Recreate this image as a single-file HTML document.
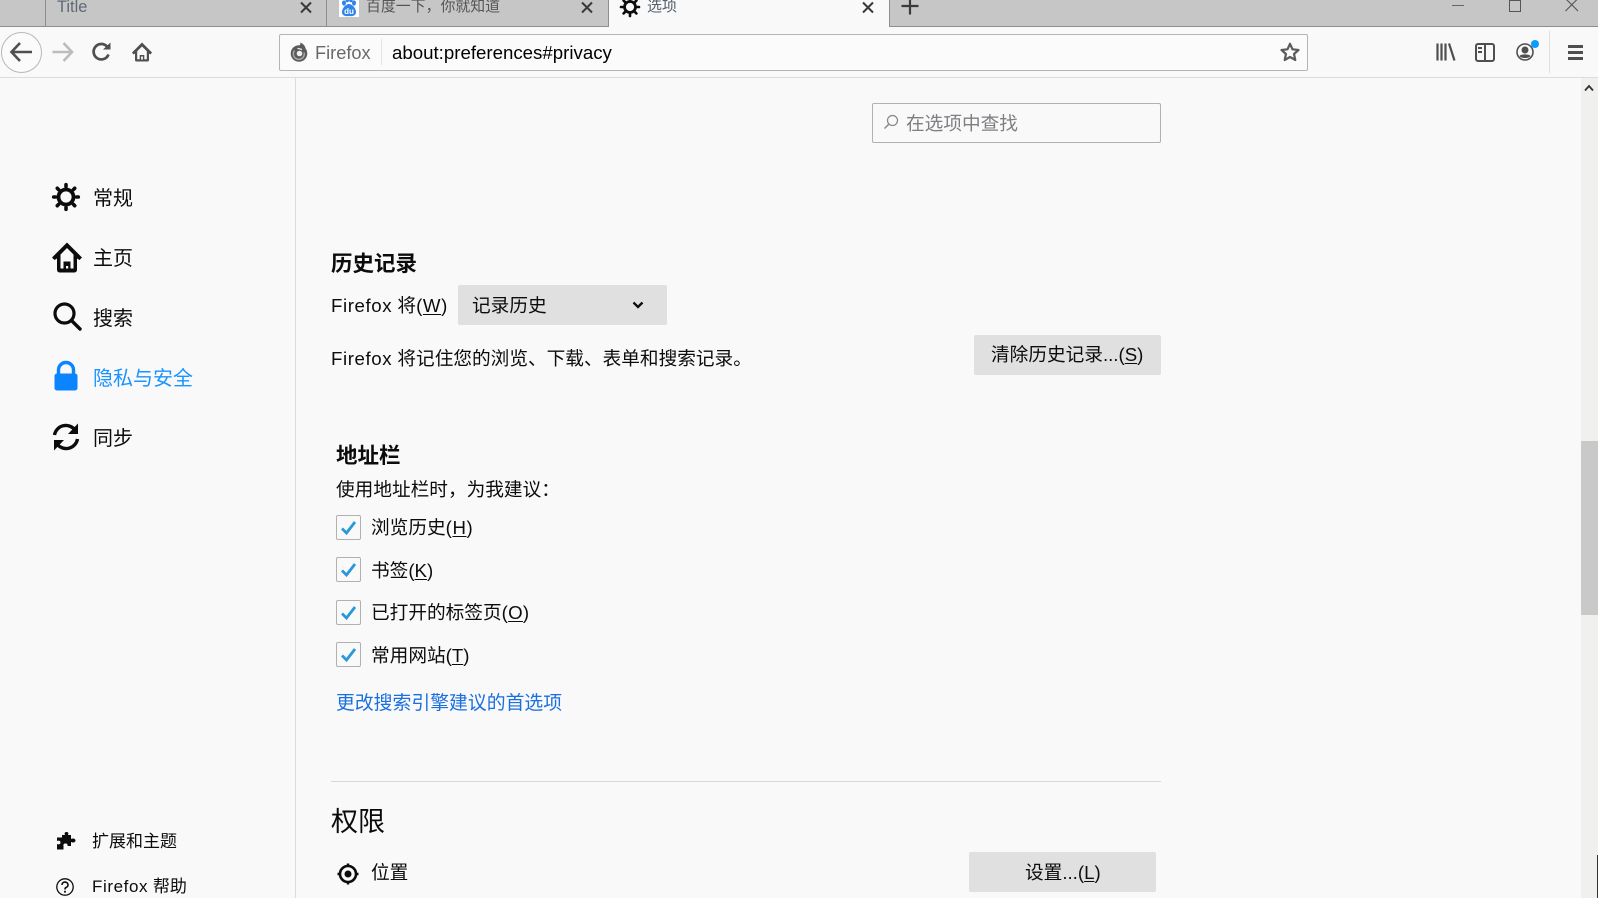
<!DOCTYPE html>
<html><head><meta charset="utf-8"><title>选项</title>
<style>
html,body{margin:0;padding:0;width:1598px;height:898px;overflow:hidden;background:#f9f9fa;}
body{position:relative;font-family:"Liberation Sans","Noto Sans CJK SC",sans-serif;color:#0c0c0d;font-size:18.67px;}
.t{position:absolute;white-space:nowrap;line-height:24px;height:24px;}
.n{font-size:20px;}
.b{position:absolute;}
svg{position:absolute;overflow:visible;}
.h{font-weight:700;font-size:21.5px;}
.cb{position:absolute;left:336px;width:23px;height:23px;border:1.5px solid #b1b1b3;border-radius:2px;}
.btn{position:absolute;background:#e0e0e1;border-radius:2px;}
.f{letter-spacing:.6px;}
u{text-underline-offset:2px;}
</style></head><body>
<!-- tab strip -->
<div class="b" style="left:0;top:0;width:1598px;height:26px;background:#c6c6c6;"></div>
<div class="b" style="left:0;top:26px;width:1598px;height:1px;background:#8e8e8e;"></div>
<div class="b" style="left:45px;top:0;width:1px;height:26px;background:#8e8e8e;"></div>
<div class="b" style="left:326px;top:0;width:1px;height:26px;background:#8e8e8e;"></div>
<div class="b" style="left:608px;top:0;width:1px;height:27px;background:#8e8e8e;"></div>
<div class="b" style="left:609px;top:0;width:280px;height:27px;background:#f9f9fa;"></div>
<div class="b" style="left:889px;top:0;width:1px;height:27px;background:#8e8e8e;"></div>
<div class="t" style="left:57px;top:-5px;font-size:16.4px;color:#5f6a78;">Title</div>
<div class="t" style="left:366px;top:-5px;font-size:14.9px;color:#555;">百度一下，你就知道</div>
<div class="t" style="left:647px;top:-5px;font-size:15px;color:#55606e;">选项</div>
<svg style="left:299px;top:1px" width="14" height="14" viewBox="0 0 14 14"><path d="M2 1.500L12 11.500M12 1.500L2 11.500" stroke="#3a3a3a" stroke-width="2"/></svg>
<svg style="left:580px;top:1px" width="14" height="14" viewBox="0 0 14 14"><path d="M2 1.500L12 11.500M12 1.500L2 11.500" stroke="#3a3a3a" stroke-width="2"/></svg>
<svg style="left:861px;top:1px" width="14" height="14" viewBox="0 0 14 14"><path d="M2 1.500L12 11.500M12 1.500L2 11.500" stroke="#3a3a3a" stroke-width="2"/></svg>
<svg style="left:901px;top:-3px" width="18" height="18" viewBox="0 0 18 18"><path d="M0.500 9H17.500M9 0.500V17.500" stroke="#3a3a3a" stroke-width="2.200"/></svg>
<!-- baidu -->
<div class="b" style="left:339px;top:-3px;width:20px;height:20px;background:#fff;"></div>
<svg style="left:339px;top:-3px" width="20" height="20" viewBox="0 0 20 20">
<ellipse cx="5" cy="6" rx="2" ry="2.600" fill="#2f83ea"/><ellipse cx="15" cy="6" rx="2" ry="2.600" fill="#2f83ea"/><ellipse cx="8.300" cy="3" rx="1.800" ry="2.400" fill="#2f83ea"/><ellipse cx="11.900" cy="3" rx="1.800" ry="2.400" fill="#2f83ea"/>
<path d="M10 7C7 7 3 11 3 15C3 18.500 6 19.500 10 19C14 19.500 17 18.500 17 15C17 11 13 7 10 7Z" fill="#2f83ea"/>
<text x="10" y="17" font-size="8" font-weight="700" text-anchor="middle" fill="#fff" font-family="Liberation Sans">du</text></svg>
<!-- active tab gear -->
<svg style="left:620px;top:-3px" width="20" height="20" viewBox="-10 -10 20 20"><g stroke="#0c0c0d" fill="none"><circle r="5.500" stroke-width="2.800"/><g stroke-width="2.600" stroke-linecap="round"><path d="M0 -9V-7.500M0 9V7.500M-9 0H-7.500M9 0H7.500M-6.400 -6.400L-5.300 -5.300M6.400 6.400L5.300 5.300M-6.400 6.400L-5.300 5.300M6.400 -6.400L5.300 -5.300"/></g></g></svg>
<!-- window controls -->
<div class="b" style="left:1452px;top:5px;width:12px;height:1px;background:#666;"></div>
<div class="b" style="left:1509px;top:0;width:10px;height:10px;border:1px solid #555;"></div>
<svg style="left:1565px;top:-2px" width="14" height="14" viewBox="0 0 14 14"><path d="M0.500 0.500L13 13M13 0.500L0.500 13" stroke="#555" stroke-width="1.100"/></svg>
<!-- toolbar -->
<div class="b" style="left:0;top:27px;width:1598px;height:50px;background:#f9f9fa;"></div>
<div class="b" style="left:0;top:77px;width:1598px;height:1px;background:#dcdcde;"></div>
<div class="b" style="left:1px;top:32px;width:39px;height:39px;border:1px solid #b8b8b8;border-radius:50%;background:#fbfbfb;"></div>
<svg style="left:8px;top:40px" width="26" height="24" viewBox="0 0 26 24"><path d="M4 12H24M12 3L3.500 12L12 21" fill="none" stroke="#4f4f50" stroke-width="2.600"/></svg>
<svg style="left:50px;top:40px" width="26" height="24" viewBox="0 0 26 24"><path d="M2.500 12H21.500M13.500 3L22 12L13.500 21" fill="none" stroke="#bcbcbd" stroke-width="2.600"/></svg>
<svg style="left:92px;top:42px" width="20" height="20" viewBox="0 0 20 20"><path d="M16.500 12.500A7.700 7.700 0 1 1 15 4.500" fill="none" stroke="#4f4f50" stroke-width="2.700"/><path d="M11 7.500H18.500V0.500Z" fill="#4f4f50"/></svg>
<svg style="left:132px;top:42px" width="20" height="20" viewBox="0 0 20 20"><path d="M10 0.500L20 10.500L18.500 12.500L17 11.500V18Q17 19.500 15.500 19.500H4.500Q3 19.500 3 18V11.500L1.500 12.500L0 10.500Z" fill="#4f4f50"/><path d="M10 4.500L14.800 9.300V17.300H12.300V13H7.700V17.300H5.200V9.300Z" fill="#f9f9fa"/><rect x="9.100" y="14.500" width="1.800" height="3" fill="#f9f9fa"/></svg>
<!-- urlbar -->
<div class="b" style="left:279px;top:34px;width:1027px;height:35px;border:1px solid #b5b5b5;border-radius:2px;background:#fbfbfb;"></div>
<svg style="left:289px;top:42px" width="20" height="20" viewBox="0 0 20 20"><circle cx="10" cy="11.500" r="8.300" fill="#5b5b5c"/><path d="M5.500 8.500A5.500 5.500 0 1 0 14.800 9.500" fill="none" stroke="#a9a9aa" stroke-width="1.500"/><circle cx="10.500" cy="11.500" r="2.800" fill="#f0f0f0"/><path d="M11.500 0.500C16.500 3 18 7 15 11.500C14 8 12 5.800 8 5.500C10.500 4.500 11.500 2.500 11.500 0.500Z" fill="#5b5b5c"/><path d="M8.500 6.300L13 7.500" stroke="#f0f0f0" stroke-width="1.200"/></svg>
<div class="t" style="left:315px;top:41px;color:#6a6a6b;font-size:18.2px;">Firefox</div>
<div class="b" style="left:381px;top:39px;width:1px;height:26px;background:#e4e4e5;"></div>
<div class="t" style="left:392px;top:41px;color:#000;">about:preferences#privacy</div>
<svg style="left:1280px;top:42px" width="20" height="20" viewBox="0 0 20 20"><path d="M10 1.800L12.500 7.300L18.500 8L14 12L15.300 18L10 15L4.700 18L6 12L1.500 8L7.500 7.300Z" fill="none" stroke="#5b5b5c" stroke-width="2.200" stroke-linejoin="round"/></svg>
<!-- right toolbar -->
<svg style="left:1436px;top:43px" width="20" height="18" viewBox="0 0 20 18"><path d="M1.500 0.500V17.500M5.500 0.500V17.500M9.500 0.500V17.500M13 0.500L18.500 17.500" fill="none" stroke="#4f4f50" stroke-width="2.200"/></svg>
<div class="b" style="left:1475px;top:43px;width:16px;height:15px;border:2px solid #4f4f50;border-radius:3px;"></div>
<div class="b" style="left:1484px;top:43px;width:2px;height:17px;background:#4f4f50;"></div>
<div class="b" style="left:1478px;top:47px;width:4px;height:2px;background:#4f4f50;"></div>
<div class="b" style="left:1478px;top:51px;width:4px;height:2px;background:#4f4f50;"></div>
<svg style="left:1516px;top:43px" width="18" height="18" viewBox="0 0 18 18"><circle cx="9" cy="9" r="8" fill="none" stroke="#4f4f50" stroke-width="1.600"/><circle cx="9" cy="7" r="3.500" fill="#4f4f50"/><path d="M3.500 13C5 10.800 13 10.800 14.500 13C13 15.700 5 15.700 3.500 13Z" fill="#4f4f50"/></svg>
<div class="b" style="left:1531px;top:40px;width:8px;height:8px;border-radius:50%;background:#0a9dff;"></div>
<div class="b" style="left:1549px;top:31px;width:1px;height:42px;background:#e0e0e1;"></div>
<div class="b" style="left:1568px;top:45px;width:15px;height:2.500px;background:#4f4f50;"></div>
<div class="b" style="left:1568px;top:51px;width:15px;height:2.500px;background:#4f4f50;"></div>
<div class="b" style="left:1568px;top:57px;width:15px;height:2.500px;background:#4f4f50;"></div>
<!-- sidebar divider -->
<div class="b" style="left:295px;top:78px;width:1px;height:820px;background:#dcdcde;"></div>
<!-- scrollbar -->
<div class="b" style="left:1581px;top:78px;width:17px;height:820px;background:#f0f0ef;"></div>
<div class="b" style="left:1581px;top:441px;width:17px;height:174px;background:#c9c9c9;"></div>
<div class="b" style="left:1597px;top:855px;width:1px;height:43px;background:#333;"></div>
<svg style="left:1584px;top:84px" width="10" height="8" viewBox="0 0 10 8"><path d="M1 6.500L5 2L9 6.500" fill="none" stroke="#333" stroke-width="1.800"/></svg>
<!-- sidebar -->
<svg style="left:52px;top:183px" width="28" height="28" viewBox="-14 -14 28 28"><g stroke="#0c0c0d" fill="none"><circle r="7.500" stroke-width="3.800"/><path stroke-width="3.600" stroke-linecap="round" d="M0 -12.300V-10.500M0 12.300V10.500M-12.300 0H-10.500M12.300 0H10.500M-8.700 -8.700L-7.400 -7.400M8.700 8.700L7.400 7.400M-8.700 8.700L-7.400 7.400M8.700 -8.700L7.400 -7.400"/></g></svg>
<div class="t n" style="left:93px;top:187px;">常规</div>
<svg style="left:52px;top:242px" width="30" height="31" viewBox="0 0 30 31"><path d="M15 0.500L30 15.500L27.500 18L25 16.500V27.500Q25 30.500 22 30.500H8Q5 30.500 5 27.500V16.500L2.500 18L0 15.500Z" fill="#0c0c0d"/><path d="M15 6L21.500 12.500V26.500H18.500V19.500H11.500V26.500H8.500V12.500Z" fill="#f9f9fa"/><rect x="14" y="24" width="2.200" height="2.500" fill="#f9f9fa"/></svg>
<div class="t n" style="left:93px;top:247px;">主页</div>
<svg style="left:52px;top:301px" width="31" height="31" viewBox="0 0 31 31"><circle cx="12.500" cy="12.500" r="9.500" fill="none" stroke="#0c0c0d" stroke-width="3.200"/><path d="M19.500 19.500L28 28" stroke="#0c0c0d" stroke-width="3.400" stroke-linecap="round"/></svg>
<div class="t n" style="left:93px;top:307px;">搜索</div>
<svg style="left:54px;top:361px" width="24" height="30" viewBox="0 0 24 30"><path d="M4.500 13V9A7.500 7.500 0 0 1 19.500 9V13" fill="none" stroke="#0a84ff" stroke-width="3.400"/><rect x="0.500" y="12.500" width="23" height="17" rx="2.500" fill="#0a84ff"/></svg>
<div class="t n" style="left:93px;top:367px;color:#1a94ff;">隐私与安全</div>
<svg style="left:52px;top:422px" width="28" height="30" viewBox="0 0 28 30"><path d="M2.500 13A11.500 11.500 0 0 1 23 8" fill="none" stroke="#0c0c0d" stroke-width="3.400"/><path d="M25.500 17A11.500 11.500 0 0 1 5 22" fill="none" stroke="#0c0c0d" stroke-width="3.400"/><path d="M26 1.500V12H16Z" fill="#0c0c0d"/><path d="M2 28.500V18H12Z" fill="#0c0c0d"/></svg>
<div class="t n" style="left:93px;top:427px;">同步</div>
<svg style="left:57px;top:832px" width="19" height="18" viewBox="0 0 19 18"><path d="M5 3H8C7 1 8 0 9.500 0C11 0 12 1 11 3H14V7C16 6 18.500 6.500 18.500 8.500C18.500 10.500 16 11 14 10V14H10.500C11 12.500 10 11.500 8.500 11.500C7 11.500 6 12.500 6.500 14V17.500H0V12C2 13 3.500 12 3.500 10.500C3.500 9 2 8 0 9V5.500H5Z" fill="#0c0c0d"/></svg>
<div class="t" style="left:92px;top:830px;font-size:17px;">扩展和主题</div>
<svg style="left:56px;top:878px" width="18" height="18" viewBox="0 0 18 18"><circle cx="9" cy="9" r="8.200" fill="none" stroke="#0c0c0d" stroke-width="1.300"/><path d="M6 7A3 2.800 0 1 1 10 9.500Q9 10 9 11.500" fill="none" stroke="#0c0c0d" stroke-width="1.600"/><rect x="8.100" y="12.800" width="1.800" height="1.800" fill="#0c0c0d"/></svg>
<div class="t" style="left:92px;top:875px;font-size:17px;"><span class="f">Firefox</span> 帮助</div>
<!-- search box -->
<div class="b" style="left:872px;top:103px;width:287px;height:38px;border:1px solid #b1b1b3;border-radius:2px;"></div>
<svg style="left:883px;top:114px" width="16" height="16" viewBox="0 0 16 16"><circle cx="9.500" cy="6.500" r="5" fill="none" stroke="#8a8a8c" stroke-width="1.300"/><path d="M6 10L1.500 14.500" stroke="#8a8a8c" stroke-width="1.500"/></svg>
<div class="t" style="left:906px;top:112px;color:#7f7f82;">在选项中查找</div>
<!-- history -->
<div class="t h" style="left:331px;top:252px;">历史记录</div>
<div class="t" style="left:331px;top:294px;"><span class="f">Firefox</span> 将<span class="f">(<u>W</u>)</span></div>
<div class="btn" style="left:458px;top:285px;width:209px;height:40px;"></div>
<div class="t" style="left:472px;top:294px;">记录历史</div>
<svg style="left:632px;top:301px" width="12" height="9" viewBox="0 0 12 9"><path d="M1.500 1.500L6 6L10.500 1.500" fill="none" stroke="#0c0c0d" stroke-width="2.300"/></svg>
<div class="t" style="left:331px;top:347px;"><span class="f">Firefox</span> 将记住您的浏览、下载、表单和搜索记录。</div>
<div class="btn" style="left:974px;top:335px;width:187px;height:40px;"></div>
<div class="t" style="left:991px;top:343px;">清除历史记录...(<u>S</u>)</div>
<!-- address bar -->
<div class="t h" style="left:336px;top:444px;">地址栏</div>
<div class="t" style="left:336px;top:478px;">使用地址栏时，为我建议：</div>
<div class="cb" style="top:515px;"></div>
<svg style="left:336px;top:515px" width="25" height="25" viewBox="0 0 25 25"><path d="M6 13.500L10.500 18L19 7" fill="none" stroke="#2a98d8" stroke-width="2.800"/></svg>
<div class="t" style="left:371px;top:516px;">浏览历史<span class="f">(<u>H</u>)</span></div>
<div class="cb" style="top:557px;"></div>
<svg style="left:336px;top:557px" width="25" height="25" viewBox="0 0 25 25"><path d="M6 13.500L10.500 18L19 7" fill="none" stroke="#2a98d8" stroke-width="2.800"/></svg>
<div class="t" style="left:371px;top:559px;">书签(<u>K</u>)</div>
<div class="cb" style="top:600px;"></div>
<svg style="left:336px;top:600px" width="25" height="25" viewBox="0 0 25 25"><path d="M6 13.500L10.500 18L19 7" fill="none" stroke="#2a98d8" stroke-width="2.800"/></svg>
<div class="t" style="left:371px;top:601px;">已打开的标签页<span style="letter-spacing:.3px">(<u>O</u>)</span></div>
<div class="cb" style="top:642px;"></div>
<svg style="left:336px;top:642px" width="25" height="25" viewBox="0 0 25 25"><path d="M6 13.500L10.500 18L19 7" fill="none" stroke="#2a98d8" stroke-width="2.800"/></svg>
<div class="t" style="left:371px;top:644px;">常用网站(<u>T</u>)</div>
<div class="t" style="left:336px;top:691px;color:#1a6fe0;font-size:18.85px;">更改搜索引擎建议的首选项</div>
<!-- permissions -->
<div class="b" style="left:331px;top:781px;width:830px;height:1px;background:#d7d7db;"></div>
<div class="t" style="left:331px;top:808px;font-size:27px;height:28px;line-height:28px;">权限</div>
<svg style="left:337px;top:863px" width="22" height="22" viewBox="0 0 22 22"><circle cx="11" cy="11" r="8" fill="none" stroke="#0c0c0d" stroke-width="2.600"/><circle cx="11" cy="11" r="3.500" fill="#0c0c0d"/><path d="M11 0.500V3M11 19V21.500M0.500 11H3M19 11H21.500" stroke="#0c0c0d" stroke-width="2.400"/></svg>
<div class="t" style="left:371px;top:861px;">位置</div>
<div class="btn" style="left:969px;top:852px;width:187px;height:40px;"></div>
<div class="t" style="left:1025px;top:861px;">设置...(<u>L</u>)</div>
</body></html>
